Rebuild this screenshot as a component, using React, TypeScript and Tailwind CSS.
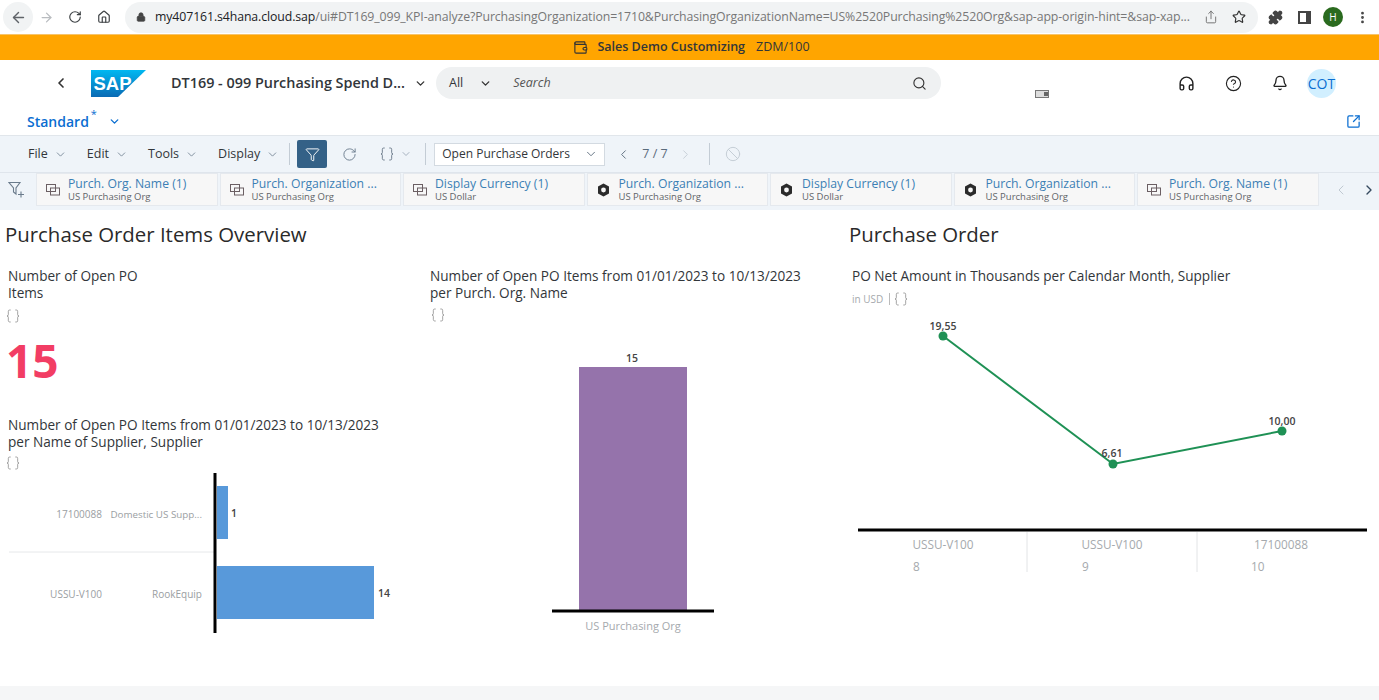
import {
  ArrowLeft,
  ArrowRight,
  RotateCw,
  Home,
  Lock,
  Share,
  Star,
  Puzzle,
  ChevronLeft,
  ChevronRight,
  ChevronDown,
  Search,
  Headphones,
  CircleHelp,
  Bell,
  Filter,
  Braces,
  MoreVertical,
  Wallet,
  SquareArrowOutUpRight,
  Ban,
} from 'lucide-react';

const sans = 'font-["Open_Sans","Liberation_Sans",sans-serif]';

function MenuItem({ label }: { label: string }) {
  return (
    <div className="flex items-center gap-[6px] text-[12.5px] text-[#32363a]">
      <span>{label}</span>
      <ChevronDown className="w-[13px] h-[13px] text-[#6a7b8c]" strokeWidth={1.5} />
    </div>
  );
}

function OverlapIcon() {
  return (
    <svg width="14" height="12" viewBox="0 0 14 12" fill="none" stroke="#6b5f63" strokeWidth="1">
      <rect x="0.5" y="0.5" width="9" height="7" />
      <rect x="4.5" y="4" width="9" height="7" />
    </svg>
  );
}

function CubeIcon() {
  return (
    <svg width="13" height="14" viewBox="0 0 13 14">
      <polygon points="6.5,0.5 12,3.5 12,10.5 6.5,13.5 1,10.5 1,3.5" fill="#2b2b2b" />
      <circle cx="6.5" cy="7" r="2.4" fill="#f7f7f7" />
    </svg>
  );
}

function AddFilterIcon() {
  return (
    <svg width="17" height="17" viewBox="0 0 17 17" fill="none" stroke="#6a7b8c" strokeWidth="1.1">
      <path d="M1 1.5h11L8 7v6L5.5 11V7z" />
      <path d="M10 13.5h6M13 10.5v6" />
    </svg>
  );
}

function FilterChip({ title, sub, cube }: { title: string; sub: string; cube?: boolean }) {
  return (
    <div className="w-[181.5px] h-[33px] shrink-0 flex items-center bg-[#f7f7f7] border border-[#e5e9ee] pl-[9px]">
      <div className="w-[22px] shrink-0 flex">{cube ? <CubeIcon /> : <OverlapIcon />}</div>
      <div className="flex flex-col">
        <span className="text-[12.2px] leading-[14px] text-[#3c7fb5] whitespace-nowrap">{title}</span>
        <span className="text-[9.5px] leading-[11px] text-[#5f6468] whitespace-nowrap">{sub}</span>
      </div>
    </div>
  );
}

function BraceMark() {
  return <Braces className="w-[16px] h-[16px] text-[#777]" strokeWidth={1} />;
}

function ChartTitle({ lines }: { lines: string[] }) {
  return (
    <div className="text-[13.6px] leading-[17px] text-[#32363a]">
      {lines.map((l) => (
        <div key={l} className="whitespace-nowrap">
          {l}
        </div>
      ))}
    </div>
  );
}

function SupplierChart() {
  return (
    <svg width="400" height="164" viewBox="0 0 400 164" className="block" fontFamily="Open Sans, sans-serif">
      <rect x="217" y="15" width="11" height="53" fill="#5899da" />
      <rect x="217" y="95" width="157" height="53" fill="#5899da" />
      <line x1="9" y1="81" x2="215" y2="81" stroke="#e6e8ea" strokeWidth="1" />
      <line x1="215" y1="2" x2="215" y2="162" stroke="#000" strokeWidth="3" />
      <text x="102" y="47" textAnchor="end" fontSize="10" fill="#9a9ea2">17100088</text>
      <text x="202" y="47" textAnchor="end" fontSize="9.8" fill="#9a9ea2">Domestic US Supp...</text>
      <text x="102" y="127" textAnchor="end" fontSize="10" fill="#9a9ea2">USSU-V100</text>
      <text x="202" y="127" textAnchor="end" fontSize="10" fill="#9a9ea2">RookEquip</text>
      <text x="231" y="46" fontSize="10.5" fontWeight="600" fill="#444">1</text>
      <text x="378" y="126" fontSize="10.5" fontWeight="600" fill="#444">14</text>
    </svg>
  );
}

function OrgChart() {
  return (
    <svg width="410" height="300" viewBox="0 0 410 300" className="block" fontFamily="Open Sans, sans-serif">
      <text x="211" y="12" textAnchor="middle" fontSize="10.5" fontWeight="600" fill="#444">15</text>
      <rect x="158" y="17" width="108" height="244" fill="#9573ab" />
      <line x1="131" y1="261" x2="293" y2="261" stroke="#000" strokeWidth="3" />
      <text x="212" y="280" textAnchor="middle" fontSize="11" fill="#a5a9ad">US Purchasing Org</text>
    </svg>
  );
}

function LineChart() {
  const cols = [
    { x: 94, a: 'USSU-V100', b: '8' },
    { x: 263, a: 'USSU-V100', b: '9' },
    { x: 432, a: '17100088', b: '10' },
  ];
  return (
    <svg width="530" height="270" viewBox="0 0 530 270" className="block" fontFamily="Open Sans, sans-serif">
      <polyline points="94,33 264,161 433,128" fill="none" stroke="#1f9155" strokeWidth="2" />
      <circle cx="94" cy="33" r="4.5" fill="#1f9155" />
      <circle cx="264" cy="161" r="4.5" fill="#1f9155" />
      <circle cx="433" cy="128" r="4.5" fill="#1f9155" />
      <text x="94" y="27" textAnchor="middle" fontSize="10.5" fontWeight="600" fill="#444">19,55</text>
      <text x="263" y="154" textAnchor="middle" fontSize="10.5" fontWeight="600" fill="#444">6,61</text>
      <text x="433" y="122" textAnchor="middle" fontSize="10.5" fontWeight="600" fill="#444">10,00</text>
      <line x1="9" y1="227" x2="518" y2="227" stroke="#000" strokeWidth="3" />
      <line x1="178" y1="229" x2="178" y2="269" stroke="#e2e4e6" />
      <line x1="348" y1="229" x2="348" y2="269" stroke="#e2e4e6" />
      {cols.map((c) => (
        <g key={c.x} fontSize="11.8" fill="#a5a9ad">
          <text x={c.x} y="246" textAnchor="middle">{c.a}</text>
          <text x={c.x - 30} y="268">{c.b}</text>
        </g>
      ))}
    </svg>
  );
}

export default function App() {
  return (
    <div className={`${sans} w-[1379px] h-[700px] overflow-hidden bg-white flex flex-col`}>
      {/* browser chrome */}
      <div className="h-[34px] shrink-0 flex items-center bg-white">
        <div className="w-[30px] h-[30px] ml-[3px] rounded-full bg-[#f1f3f4] flex items-center justify-center">
          <ArrowLeft className="w-[17px] h-[17px] text-[#5f6368]" strokeWidth={2} />
        </div>
        <ArrowRight className="w-[15px] h-[15px] ml-[6px] text-[#b9bcc0]" strokeWidth={2} />
        <RotateCw className="w-[14px] h-[14px] ml-[14px] text-[#3c4043]" strokeWidth={2} />
        <Home className="w-[14px] h-[14px] ml-[15px] text-[#3c4043]" strokeWidth={2} />
        <div className="ml-[14px] w-[1133px] h-[31px] rounded-full bg-[#f1f3f4] flex items-center pl-[11px] pr-[12px]">
          <Lock className="w-[10px] h-[10px] text-[#444] fill-[#444]" />
          <span className="ml-[9px] text-[12.3px] whitespace-nowrap text-[#777] tracking-[-0.1px]">
            <span className="text-[#202124]">my407161.s4hana.cloud.sap</span>
            /ui#DT169_099_KPI-analyze?PurchasingOrganization=1710&PurchasingOrganizationName=US%2520Purchasing%2520Org&sap-app-origin-hint=&sap-xap...
          </span>
          <div className="ml-auto flex items-center gap-[14px]">
            <Share className="w-[14px] h-[14px] text-[#666]" strokeWidth={1.5} />
            <Star className="w-[14px] h-[14px] text-[#333]" strokeWidth={2} />
          </div>
        </div>
        <Puzzle className="ml-[10px] w-[15px] h-[15px] text-[#444] fill-[#444]" />
        <div className="ml-[15px] w-[13px] h-[13px] border-2 border-[#444] border-r-[5px]" />
        <div className="ml-[12px] w-[20px] h-[20px] rounded-full bg-[#2a6a1e] text-white text-[10px] flex items-center justify-center">H</div>
        <MoreVertical className="ml-[12px] w-[15px] h-[15px] text-[#444]" strokeWidth={2.5} />
      </div>

      {/* system banner */}
      <div className="h-[26px] shrink-0 bg-[#ffa500] flex items-center justify-center text-[12.5px] text-[#32363a] border-t border-[#f7c46a] pl-[4px]">
        <Wallet className="w-[15px] h-[15px] text-[#333]" strokeWidth={1.8} />
        <span className="ml-[9px] font-semibold">Sales Demo Customizing</span>
        <span className="ml-[11px]">ZDM/100</span>
      </div>

      {/* shell header */}
      <div className="h-[46px] shrink-0 flex items-center relative">
        <ChevronLeft className="ml-[53px] w-[16px] h-[16px] text-[#333]" strokeWidth={2.5} />
        <svg width="55" height="27" viewBox="0 0 55 27" className="ml-[22px]">
          <defs>
            <linearGradient id="sapBlue" x1="0" y1="0" x2="0" y2="1">
              <stop offset="0" stopColor="#00b8f1" />
              <stop offset="1" stopColor="#0a6ab4" />
            </linearGradient>
          </defs>
          <polygon points="0,0 55,0 27,27 0,27" fill="url(#sapBlue)" />
          <text x="2.5" y="20" fontSize="18.5" fontWeight="700" fill="#fff" fontFamily="Liberation Sans, sans-serif">SAP</text>
        </svg>
        <span className="ml-[25px] text-[14.4px] font-semibold text-[#32363a] whitespace-nowrap">DT169 - 099 Purchasing Spend D...</span>
        <ChevronDown className="ml-[9px] w-[13px] h-[13px] text-[#333]" strokeWidth={2.5} />
        <div className="ml-[9px] w-[505px] h-[32px] rounded-full bg-[#eff1f2] flex items-center pl-[13px] pr-[14px]">
          <span className="text-[12.5px] text-[#32363a]">All</span>
          <ChevronDown className="ml-[16px] w-[13px] h-[13px] text-[#333]" strokeWidth={2.5} />
          <span className="ml-[21px] text-[12.5px] italic text-[#555]">Search</span>
          <Search className="ml-auto w-[15px] h-[15px] text-[#333]" strokeWidth={1.8} />
        </div>
        <Headphones className="ml-[237px] w-[17px] h-[17px] text-[#222]" strokeWidth={2} />
        <CircleHelp className="ml-[30px] w-[17px] h-[17px] text-[#222]" strokeWidth={1.6} />
        <Bell className="ml-[30px] w-[16px] h-[16px] text-[#222]" strokeWidth={2} />
        <div className="ml-[19px] w-[29px] h-[29px] rounded-full bg-[#d1efff] text-[#0a6ed1] text-[14px] flex items-center justify-center">COT</div>
        <div className="absolute left-[1035px] top-[30px] w-[14px] h-[8px] border border-[#777] bg-[#ddd] flex justify-end items-center">
          <div className="w-[4px] h-[4px] bg-[#666]" />
        </div>
      </div>

      {/* variant row */}
      <div className="h-[29px] shrink-0 flex items-center pl-[27px] pr-[18px] pt-[2px]">
        <span className="text-[14px] font-semibold text-[#0a6ed1]">Standard</span>
        <span className="text-[11px] text-[#0a6ed1] -mt-[14px] ml-[2px]">*</span>
        <ChevronDown className="ml-[11px] w-[13px] h-[13px] text-[#0a6ed1]" strokeWidth={2.5} />
        <SquareArrowOutUpRight className="ml-auto w-[15px] h-[15px] text-[#0a6ed1]" strokeWidth={2} />
      </div>

      {/* toolbar */}
      <div className="h-[37px] shrink-0 bg-[#eff4f9] border-t border-[#e1e6eb] flex items-center pl-[28px]">
        <div className="flex items-center gap-[20px]">
          <MenuItem label="File" />
          <MenuItem label="Edit" />
          <MenuItem label="Tools" />
          <MenuItem label="Display" />
        </div>
        <div className="ml-[10px] w-px h-[22px] bg-[#c3ccd5]" />
        <div className="ml-[7px] w-[30px] h-[28px] rounded-[2px] bg-[#346187] flex items-center justify-center">
          <Filter className="w-[15px] h-[15px] text-white" strokeWidth={1.5} />
        </div>
        <RotateCw className="ml-[15px] w-[15px] h-[15px] text-[#6a7b8c]" strokeWidth={1.5} />
        <Braces className="ml-[22px] w-[16px] h-[16px] text-[#556677]" strokeWidth={1.2} />
        <ChevronDown className="ml-[5px] w-[12px] h-[12px] text-[#8d9bab]" strokeWidth={1.5} />
        <div className="ml-[13px] w-px h-[22px] bg-[#c3ccd5]" />
        <div className="ml-[8px] w-[171px] h-[23px] bg-white border border-[#d3dae1] flex items-center pl-[7px] pr-[6px] text-[12px] text-[#32363a]">
          <span>Open Purchase Orders</span>
          <ChevronDown className="ml-auto w-[14px] h-[14px] text-[#556677]" strokeWidth={1.5} />
        </div>
        <ChevronLeft className="ml-[11px] w-[15px] h-[15px] text-[#5a6b7c]" strokeWidth={1.5} />
        <span className="ml-[11px] text-[12.5px] text-[#5a6b7c]">7 / 7</span>
        <ChevronRight className="ml-[10px] w-[15px] h-[15px] text-[#c5ced6]" strokeWidth={1.5} />
        <div className="ml-[16px] w-px h-[22px] bg-[#c3ccd5]" />
        <Ban className="ml-[15px] w-[16px] h-[16px] text-[#c5ced6]" strokeWidth={1.5} />
      </div>

      {/* filter bar */}
      <div className="h-[38px] shrink-0 bg-[#eff4f9] border-t border-[#dfe5ec] flex items-center pl-[8px] pb-[4px] gap-[2px]">
        <AddFilterIcon />
        <div className="w-[7px]" />
        <FilterChip title="Purch. Org. Name (1)" sub="US Purchasing Org" />
        <FilterChip title="Purch. Organization ..." sub="US Purchasing Org" />
        <FilterChip title="Display Currency (1)" sub="US Dollar" />
        <FilterChip title="Purch. Organization ..." sub="US Purchasing Org" cube />
        <FilterChip title="Display Currency (1)" sub="US Dollar" cube />
        <FilterChip title="Purch. Organization ..." sub="US Purchasing Org" cube />
        <FilterChip title="Purch. Org. Name (1)" sub="US Purchasing Org" />
        <ChevronLeft className="ml-[12px] w-[16px] h-[16px] text-[#c0c9d2]" strokeWidth={1.5} />
        <ChevronRight className="ml-[10px] w-[16px] h-[16px] text-[#354a5f]" strokeWidth={2} />
      </div>

      {/* content */}
      <div className="flex-1 grid grid-cols-[421px_428px_530px] min-h-0">
        <div className="flex flex-col pt-[11px] pl-[5px]">
          <h2 className="text-[20.4px] leading-[27px] text-[#2a2a2a] whitespace-nowrap">Purchase Order Items Overview</h2>
          <div className="pl-[3px] pt-[19px]">
            <ChartTitle lines={['Number of Open PO', 'Items']} />
            <div className="mt-[7px] -ml-[3px]">
              <BraceMark />
            </div>
            <div className="mt-[8px] -ml-[2px] text-[46px] leading-[56px] font-bold text-[#f23d64]">15</div>
            <div className="mt-[28px]">
              <ChartTitle lines={['Number of Open PO Items from 01/01/2023 to 10/13/2023', 'per Name of Supplier, Supplier']} />
            </div>
            <div className="mt-[5px] -ml-[3px]">
              <BraceMark />
            </div>
          </div>
          <div className="-ml-[5px]">
            <SupplierChart />
          </div>
        </div>

        <div className="flex flex-col pt-[57px] pl-[9px]">
          <ChartTitle lines={['Number of Open PO Items from 01/01/2023 to 10/13/2023', 'per Purch. Org. Name']} />
          <div className="mt-[6px]">
            <BraceMark />
          </div>
          <div className="-ml-[9px] mt-[27px]">
            <OrgChart />
          </div>
        </div>

        <div className="flex flex-col pt-[11px]">
          <h2 className="text-[20.4px] leading-[27px] text-[#2a2a2a]">Purchase Order</h2>
          <div className="pl-[3px] pt-[19px]">
            <ChartTitle lines={['PO Net Amount in Thousands per Calendar Month, Supplier']} />
            <div className="mt-[7px] flex items-center">
              <span className="text-[10px] text-[#a5a9ad]">in USD</span>
              <span className="ml-[6px] w-px h-[12px] bg-[#bbb]" />
              <span className="ml-[3px]">
                <BraceMark />
              </span>
            </div>
          </div>
          <div className="-mt-[4px]">
            <LineChart />
          </div>
        </div>
      </div>

      <div className="h-[14px] shrink-0 bg-[#f5f6f7]" />
    </div>
  );
}
